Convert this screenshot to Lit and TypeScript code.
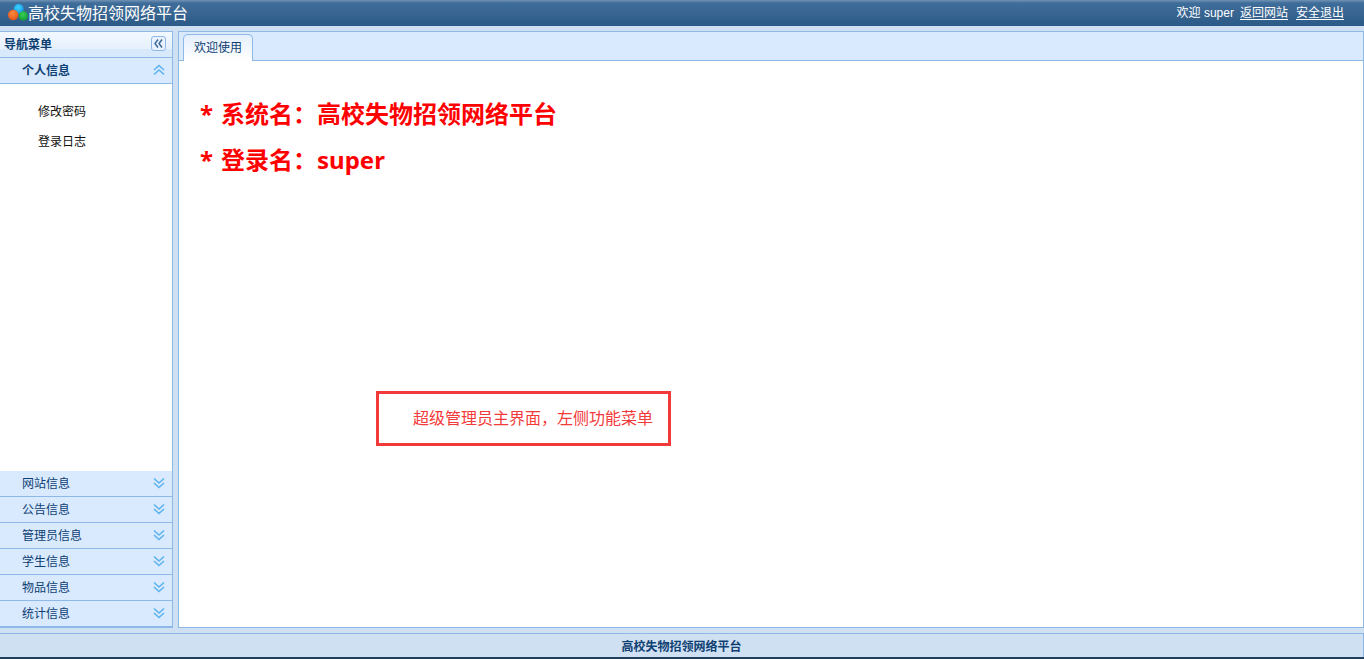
import { LitElement, html, css, svg } from "lit";
import { customElement } from "lit/decorators.js";

const chevrons = (up: boolean) => html`<svg class="chev" width="12" height="12" viewBox="0 0 12 12">
  ${up
    ? svg`<path d="M1 6 L6 1.5 L11 6 M1 10.5 L6 6 L11 10.5" fill="none" stroke="#5cb3ee" stroke-width="1.6"/>`
    : svg`<path d="M1 1.5 L6 6 L11 1.5 M1 6 L6 10.5 L11 6" fill="none" stroke="#5cb3ee" stroke-width="1.6"/>`}
</svg>`;

const closedGroups = ["网站信息", "公告信息", "管理员信息", "学生信息", "物品信息", "统计信息"];

@customElement("app-root")
export class AppRoot extends LitElement {
  static override styles = css`
    :host {
      display: flex;
      flex-direction: column;
      height: 659px;
      position: relative;
      overflow: hidden;
      background: #cfe0f3;
      font-family: "Liberation Sans", "Noto Sans CJK SC", sans-serif;
      font-size: 12px;
    }

    .header {
      height: 26px;
      flex: none;
      display: flex;
      align-items: center;
      justify-content: space-between;
      background: linear-gradient(to bottom, #7093b5 0, #3f6d9a 3px, #386591 50%, #2b5a88 100%);
      color: #fff;
    }
    .brand {
      display: flex;
      align-items: center;
      font-size: 16px;
      padding-left: 8px;
      margin-top: -3px;
    }
    .brand svg {
      margin-top: 3px;
    }
    .user {
      display: flex;
      gap: 8px;
      padding-right: 20px;
      margin-top: -3px;
    }
    .user span {
      margin-right: -2px;
    }
    .user u {
      text-underline-offset: 2px;
    }

    .body {
      flex: 1;
      display: flex;
      gap: 5px;
      padding-top: 5px;
      min-height: 0;
    }

    .side {
      width: 172px;
      flex: none;
      border-top: 1px solid #8db8e8;
      border-right: 1px solid #8db8e8;
      border-bottom: 1px solid #8db8e8;
      display: flex;
      flex-direction: column;
      background: #fff;
    }
    .side-title {
      height: 23px;
      flex: none;
      display: flex;
      align-items: center;
      justify-content: space-between;
      padding: 0 6px 2px 4px;
      background: linear-gradient(to bottom, #f2f8ff 0, #e6f0fd 68%, #d9e9fc 68%, #d9e9fc 100%);
      border-bottom: 1px solid #8db8e8;
      color: #0e3f72;
      font-weight: bold;
    }
    .collapse {
      width: 13px;
      height: 13px;
      border: 1px solid #8db8e8;
      border-radius: 3px;
      display: flex;
      align-items: center;
      justify-content: center;
      background: #e9f2fe;
    }
    .group {
      height: 23px;
      flex: none;
      display: flex;
      align-items: center;
      justify-content: space-between;
      padding: 0 7px 2px 22px;
      background: #d9eaff;
      border-bottom: 1px solid #8db8e8;
      color: #0e3f72;
    }
    .group.open {
      font-weight: bold;
    }
    .chev {
      margin-top: 1px;
    }
    .menu {
      flex: 1;
      padding-top: 13px;
      color: #111;
    }
    .menu div {
      height: 30px;
      line-height: 30px;
      padding-left: 38px;
    }

    .main {
      flex: 1;
      min-width: 0;
      display: flex;
      flex-direction: column;
      border: 1px solid #8db8e8;
      background: #fff;
    }
    .tabs {
      height: 28px;
      flex: none;
      display: flex;
      align-items: flex-end;
      padding-left: 4px;
      background: #d9eaff;
      border-bottom: 1px solid #8db8e8;
    }
    .tab {
      width: 70px;
      height: 27px;
      box-sizing: border-box;
      margin-bottom: -1px;
      border: 1px solid #8db8e8;
      border-bottom: none;
      border-radius: 5px 5px 0 0;
      background: linear-gradient(to bottom, #e4effd, #fff);
      color: #0e3f72;
      text-align: center;
      line-height: 27px;
    }
    .content {
      flex: 1;
      padding: 30px 0 0 21px;
      color: #ff0000;
      font-family: "Noto Sans", "Noto Sans CJK SC", sans-serif;
      font-weight: bold;
      font-size: 24px;
    }
    .content div {
      height: 46px;
      line-height: 46px;
    }
    .content span {
      display: inline-block;
      width: 21px;
    }

    .footer {
      height: 24px;
      flex: none;
      margin-top: 5px;
      border-top: 1px solid #8db8e8;
      border-right: 1px solid #8db8e8;
      box-sizing: border-box;
      display: flex;
      align-items: center;
      justify-content: center;
      background: #cfe0f3;
      color: #0e3f72;
      font-weight: bold;
    }
    .edge {
      height: 2px;
      flex: none;
      background: #1f3f5f;
    }

    .note {
      position: absolute;
      left: 376px;
      top: 391px;
      width: 295px;
      height: 55px;
      box-sizing: border-box;
      border: 3px solid #f33a3a;
      padding-left: 34px;
      line-height: 49px;
      font-size: 16px;
      color: #f33a3a;
      background: #fff;
    }
  `;

  override render() {
    return html`
      <div class="header">
        <div class="brand">
          <svg width="20" height="20" viewBox="0 0 20 20">
            <defs>
              <radialGradient id="b" cx="45%" cy="35%" r="65%">
                <stop offset="0" stop-color="#3fd4ff" />
                <stop offset="1" stop-color="#1295e0" />
              </radialGradient>
              <radialGradient id="o" cx="45%" cy="35%" r="65%">
                <stop offset="0" stop-color="#ff8a3c" />
                <stop offset="1" stop-color="#e2551c" />
              </radialGradient>
              <radialGradient id="g" cx="45%" cy="35%" r="65%">
                <stop offset="0" stop-color="#35d04f" />
                <stop offset="1" stop-color="#159a3a" />
              </radialGradient>
            </defs>
            <circle cx="10.7" cy="6" r="5" fill="url(#b)" />
            <circle cx="15.3" cy="13" r="4.7" fill="url(#g)" />
            <circle cx="5.2" cy="12" r="5.2" fill="url(#o)" />
          </svg>
          高校失物招领网络平台
        </div>
        <div class="user">
          <span>欢迎 super</span>
          <u>返回网站</u>
          <u>安全退出</u>
        </div>
      </div>
      <div class="body">
        <div class="side">
          <div class="side-title">
            导航菜单
            <div class="collapse">
              <svg width="9" height="9" viewBox="0 0 9 9">
                <path d="M4 .5 L1 4.5 L4 8.5 M8 .5 L5 4.5 L8 8.5" fill="none" stroke="#3f6d9a" stroke-width="1.5" />
              </svg>
            </div>
          </div>
          <div class="group open">个人信息${chevrons(true)}</div>
          <div class="menu">
            <div>修改密码</div>
            <div>登录日志</div>
          </div>
          ${closedGroups.map((name) => html`<div class="group">${name}${chevrons(false)}</div>`)}
        </div>
        <div class="main">
          <div class="tabs"><div class="tab">欢迎使用</div></div>
          <div class="content">
            <div><span>*</span>系统名：高校失物招领网络平台</div>
            <div><span>*</span>登录名：super</div>
          </div>
        </div>
      </div>
      <div class="footer">高校失物招领网络平台</div>
      <div class="edge"></div>
      <div class="note">超级管理员主界面，左侧功能菜单</div>
    `;
  }
}
